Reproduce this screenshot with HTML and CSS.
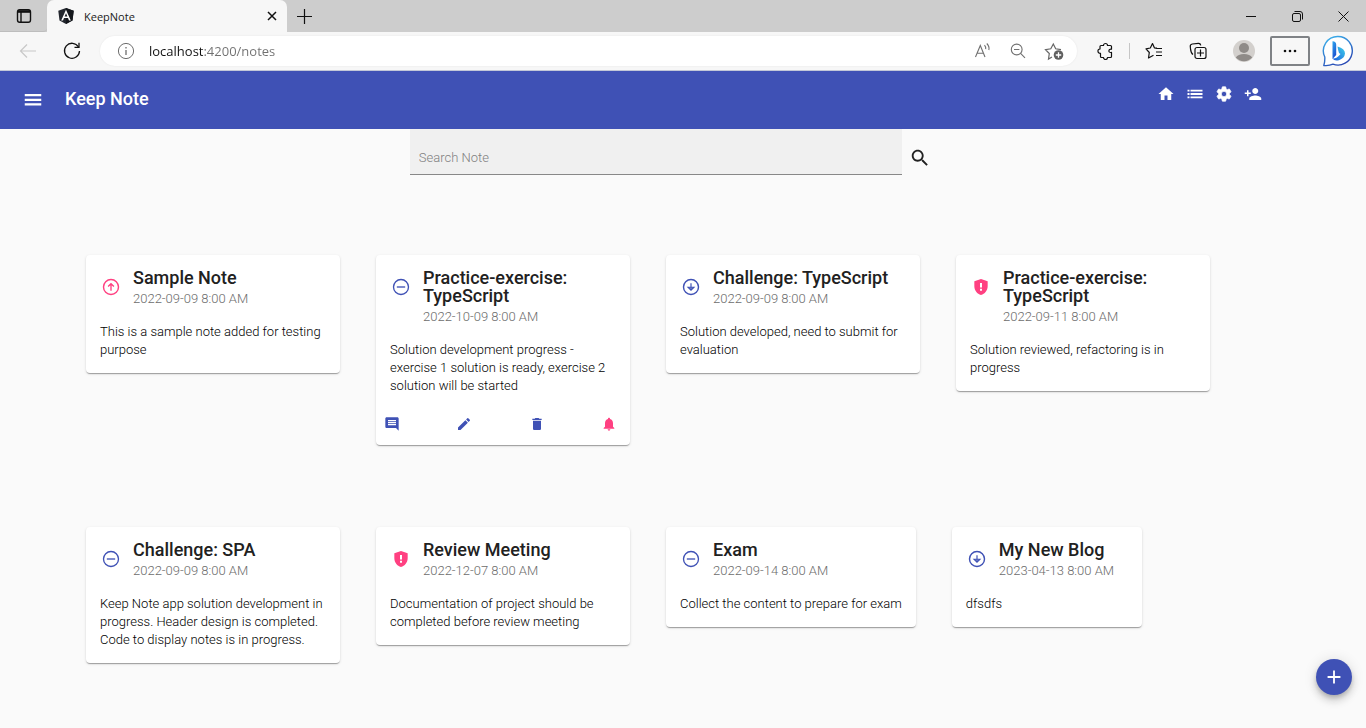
FILE: index.html
```html
<!DOCTYPE html>
<html lang="en">
<head>
<meta charset="utf-8">
<title>KeepNote</title>
<link rel="stylesheet" href="styles.css">
</head>
<body>
<svg class="defs" aria-hidden="true">
  <defs>
    <symbol id="minus-circle" viewBox="0 0 24 24"><circle cx="12" cy="12" r="9" fill="none" stroke="currentColor" stroke-width="1.600"/><path d="M7 12h10" stroke="currentColor" stroke-width="1.600"/></symbol>
    <symbol id="up-circle" viewBox="0 0 24 24"><circle cx="12" cy="12" r="9" fill="none" stroke="currentColor" stroke-width="1.700"/><path d="M12 16.500V8.500M8.500 11.500 12 8l3.500 3.500" fill="none" stroke="currentColor" stroke-width="1.600"/></symbol>
    <symbol id="down-circle" viewBox="0 0 24 24"><circle cx="12" cy="12" r="9" fill="none" stroke="currentColor" stroke-width="1.700"/><path d="M12 7.500v8M8.500 12.300l3.500 3.500 3.500-3.500z" stroke="currentColor" stroke-width="1.400" fill="none"/></symbol>
    <symbol id="shield" viewBox="0 0 24 24"><path fill-rule="evenodd" d="M12 2.500 4 5v6.100c0 5.050 3.410 9.300 8 10.400 4.590-1.100 8-5.350 8-10.400V5l-8-2.500zm1.200 14h-2.400v-2.300h2.400v2.300zm0-4h-2.400V7.300h2.400v5.200z"/></symbol>
  </defs>
</svg>

<header class="browser">
  <div class="tabstrip">
    <button class="tab-actions" aria-label="Tab actions menu">
      <svg width="16" height="16" viewBox="0 0 16 16" fill="none" stroke="#111" stroke-width="1.400"><rect x="1.500" y="1.700" width="13" height="12.600" rx="2.200"/><path d="M2 3.500h12" stroke-width="2.600"/><path d="M5 4v10"/></svg>
    </button>
    <div class="tab">
      <svg width="18" height="18" viewBox="0 0 18 18"><path fill="#23272e" d="M9 1 16.700 3.700 15.500 13.500 9 17 2.500 13.500 1.300 3.700z"/><path fill="#14171c" d="M9 1l7.700 2.700-1.200 9.800L9 17z"/><path fill="#fff" fill-rule="evenodd" d="M9 2.800 4.200 13.400H6l1-2.400h4l1 2.400h1.800zM9 6.200l1.400 3.300H7.600z"/></svg>
      <span class="tab-title">KeepNote</span>
      <button class="tab-close" aria-label="Close tab"><svg width="10" height="10" viewBox="0 0 10 10" stroke="#111" stroke-width="1.500"><path d="M1 1l8 8M9 1 1 9"/></svg></button>
    </div>
    <button class="new-tab" aria-label="New tab"><svg width="15" height="15" viewBox="0 0 15 15" stroke="#111" stroke-width="1.200"><path d="M7.500 0v15M0 7.500h15"/></svg></button>
    <div class="window-buttons">
      <button aria-label="Minimize"><svg width="11" height="11" viewBox="0 0 11 11" stroke="#111"><path d="M0 5.500h10"/></svg></button>
      <button aria-label="Restore"><svg width="11" height="11" viewBox="0 0 11 11" fill="none" stroke="#111"><rect x=".5" y="2.500" width="8" height="8" rx="1.500"/><path d="M2.500.5H8a2.500 2.500 0 0 1 2.500 2.500v5.500"/></svg></button>
      <button aria-label="Close window"><svg width="11" height="11" viewBox="0 0 11 11" stroke="#111"><path d="M.5.5l10 10M10.500.5l-10 10"/></svg></button>
    </div>
  </div>

  <div class="toolbar">
    <button aria-label="Back" disabled><svg width="18" height="18" viewBox="0 0 18 18" fill="none" stroke="#c8c8c8" stroke-width="1.200"><path d="M17 9H1.500M8 2.500 1.500 9 8 15.500"/></svg></button>
    <button aria-label="Refresh"><svg width="18" height="18" viewBox="0 0 18 18" fill="none" stroke="#111" stroke-width="1.300"><path d="M15.500 5A7.500 7.500 0 1 0 16.500 9"/><path d="M16 .8V5.300h-4.500"/></svg></button>
    <div class="address">
      <svg width="18" height="18" viewBox="0 0 18 18" fill="none" stroke="#6e6e6e"><circle cx="9" cy="9" r="7.600"/><path d="M9 8v5M9 5v1.500" stroke-width="1.300"/></svg>
      <input class="url" type="text" aria-label="Address" value="localhost:4200/notes">
      <button aria-label="Read aloud"><svg width="18" height="18" viewBox="0 0 18 18" fill="none" stroke="#707070" stroke-width="1.100"><path d="M2.500 15 7.300 3.500 12 15M4 11.200h6.600M11.500 3.200q1.600 1.800 1.200 4M13.800 1.500q3 3 2 6.500"/></svg></button>
      <button aria-label="Zoom"><svg width="16" height="16" viewBox="0 0 16 16" fill="none" stroke="#707070" stroke-width="1.100"><circle cx="6.700" cy="6.500" r="5.400"/><path d="M10.600 10.400 15 14.800M4 6.500h5.400"/></svg></button>
      <button aria-label="Add to favorites"><svg width="20" height="20" viewBox="0 0 20 20" fill="none" stroke="#666" stroke-width="1.200"><path d="M8 16 4.500 18l.8-5.500L1.500 8.600l5.300-.8L9.300 3l2.400 4.800 5.300.8"/><circle cx="14.500" cy="14" r="4.800" fill="#606060" stroke="none"/><path d="M14.500 11.300v5.400M11.800 14h5.400" stroke="#fff" stroke-width="1.300"/></svg></button>
    </div>
    <button aria-label="Extensions"><svg width="18" height="18" viewBox="0 0 18 18" fill="none" stroke="#111" stroke-width="1.200" stroke-linejoin="round"><path d="M5 3.500h2.500a2 2 0 0 1 4 0H14.500q1 0 1 1v2.700c-3.200-.8-3.700 4 0 3.200V14.500q0 1-1 1h-3a2 2 0 0 1-4 0H5.500q-1 0-1-1V11.400C1.200 11.400 1.200 7 4 7V4.500q0-1 1-1z"/></svg></button>
    <span class="divider"></span>
    <button aria-label="Favorites"><svg width="18" height="18" viewBox="0 0 18 18" fill="none" stroke="#111" stroke-width="1.200" stroke-linejoin="round"><path d="M12 6.200 9.500 6 7.500 1.500 5.300 6 1 6.800l3.300 3.700L3.500 16l5-2.700M10.500 6.500H17M11 10h6M11 13.500h6"/></svg></button>
    <button aria-label="Collections"><svg width="18" height="18" viewBox="0 0 18 18" fill="none" stroke="#111" stroke-width="1.200"><rect x="6" y="5.500" width="11" height="11" rx="2"/><path d="M11.500 7.500v7M8 11h7M4 12.500C1.500 11 1.800 9 1.300 5q-.5-2.500 2-3l6-.7q2-.2 2.500 2"/></svg></button>
    <button aria-label="Profile"><svg width="22" height="22" viewBox="0 0 22 22"><circle cx="11" cy="11" r="11" fill="#d3d0cd"/><circle cx="11" cy="8" r="5" fill="#8f8b88"/><path fill="#8f8b88" d="M2.800 17.500Q5 14 11 14t8.200 3.500A11 11 0 0 1 2.800 17.500z"/></svg></button>
    <button class="more" aria-label="Settings and more"><svg width="14" height="4" viewBox="0 0 14 4" fill="#111"><circle cx="2" cy="2" r="1.300"/><circle cx="7" cy="2" r="1.300"/><circle cx="12" cy="2" r="1.300"/></svg></button>
    <button aria-label="Discover"><svg width="32" height="32" viewBox="0 0 32 32"><defs><linearGradient id="ring" x1="0" y1="0" x2=".5" y2="1"><stop offset="0" stop-color="#3db9f0"/><stop offset="1" stop-color="#2a4bb5"/></linearGradient><linearGradient id="bing" x1="0" y1="0" x2=".4" y2="1"><stop offset="0" stop-color="#2ea8ee"/><stop offset="1" stop-color="#1b4fd0"/></linearGradient><linearGradient id="swoosh" x1="1" y1="0" x2="0" y2="1"><stop offset="0" stop-color="#3ed1ea"/><stop offset="1" stop-color="#1c5cdd"/></linearGradient></defs><path fill="#fff" stroke="url(#ring)" stroke-width="1.400" stroke-linejoin="round" d="M16 1.500a14.300 14.300 0 1 1-5 27.700Q7 31 1.800 30.500 3 27 2.800 22A14.300 14.300 0 0 1 16 1.500z"/><path fill="url(#bing)" d="M10.500 6.300q3.700.3 3.700 3.400V20l-3.700 4z"/><path fill="url(#swoosh)" d="M15.500 11.500q7.500 2.200 7.500 7-.5 4.500-5.500 6.500-5 1.500-7-1.500 4 .5 8-4.500l-1.500-1q-1-3-1.500-6.500z"/></svg></button>
  </div>
</header>

<nav class="appbar">
  <button class="menu" aria-label="Menu"><svg width="22" height="22" viewBox="0 0 24 24"><path d="M3 18h18v-2.500H3zm0-5h18v-2.500H3zM3 5.500V8h18V5.500z"/></svg></button>
  <h1 class="brand">Keep Note</h1>
  <div class="links">
    <a href="#" aria-label="Home"><svg viewBox="0 0 24 24"><path d="M10 20v-6h4v6h5v-8h3L12 3 2 12h3v8z"/></svg></a>
    <a href="#" aria-label="List"><svg viewBox="0 0 24 24"><path d="M2 10.700h2.700v2.600H2zm0 4.500h2.700v2.600H2zm0-9h2.700v2.600H2zm4 4.500h16v2.600H6zm0 4.500h16v2.600H6zm0-9v2.600h16V6.200z"/></svg></a>
    <a href="#" aria-label="Settings"><svg viewBox="0 0 24 24"><path stroke="currentColor" d="M19.140 12.940c.04-.3.06-.61.06-.94 0-.32-.02-.64-.07-.94l2.030-1.580c.18-.14.23-.41.12-.61l-1.920-3.320c-.12-.22-.37-.29-.59-.22l-2.390.96c-.5-.38-1.030-.7-1.620-.94l-.36-2.540c-.04-.24-.24-.41-.48-.41h-3.840c-.24 0-.43.17-.47.41l-.36 2.540c-.59.24-1.130.57-1.620.94l-2.390-.96c-.22-.08-.47 0-.59.22L2.740 8.870c-.12.21-.08.47.12.61l2.030 1.580c-.05.3-.09.63-.09.94s.02.64.07.94l-2.030 1.580c-.18.14-.23.41-.12.61l1.920 3.320c.12.22.37.29.59.22l2.390-.96c.5.38 1.030.7 1.620.94l.36 2.540c.05.24.24.41.48.41h3.840c.24 0 .44-.17.47-.41l.36-2.540c.59-.24 1.130-.56 1.620-.94l2.390.96c.22.08.47 0 .59-.22l1.920-3.320c.12-.22.07-.47-.12-.61l-2.010-1.580zM12 15.600c-1.980 0-3.600-1.620-3.600-3.600s1.620-3.600 3.600-3.600 3.600 1.620 3.600 3.600-1.620 3.600-3.600 3.600z"/></svg></a>
    <a href="#" aria-label="Add person"><svg viewBox="0 0 24 24"><path d="M15 12c2.210 0 4-1.790 4-4s-1.790-4-4-4-4 1.790-4 4 1.790 4 4 4zm-9-2V7H4v3H1v2h3v3h2v-3h3v-2H6zm9 4c-2.670 0-8 1.340-8 4v2h16v-2c0-2.660-5.330-4-8-4z"/></svg></a>
  </div>
</nav>

<main>
  <form class="search">
    <input type="text" aria-label="Search Note" placeholder="Search Note">
    <button type="button" aria-label="Search"><svg width="22" height="22" viewBox="0 0 24 24"><path d="M15.500 14h-.79l-.28-.27C15.410 12.590 16 11.110 16 9.500 16 5.910 13.090 3 9.500 3S3 5.910 3 9.500 5.910 16 9.500 16c1.610 0 3.090-.59 4.230-1.570l.27.28v.79l5 4.990L20.490 19l-4.990-5zm-6 0C7.010 14 5 11.990 5 9.500S7.010 5 9.500 5 14 7.010 14 9.500 11.990 14 9.500 14z"/></svg></button>
  </form>

  <section class="notes">
    <article class="card">
      <div class="card-head"><svg class="icon accent"><use href="#up-circle"/></svg><div><h2>Sample Note</h2><p class="date">2022-09-09 8:00 AM</p></div></div>
      <p class="text">This is a sample note added for testing purpose</p>
    </article>
    <article class="card">
      <div class="card-head"><svg class="icon"><use href="#minus-circle"/></svg><div><h2>Practice-exercise: TypeScript</h2><p class="date">2022-10-09 8:00 AM</p></div></div>
      <p class="text">Solution development progress - exercise 1 solution is ready, exercise 2 solution will be started</p>
      <div class="actions">
        <button aria-label="Comment"><svg viewBox="0 0 24 24"><path d="M21.990 4c0-1.100-.89-2-1.990-2H4c-1.100 0-2 .9-2 2v12c0 1.100.9 2 2 2h14l4 4-.01-18zM18 14H6v-2h12v2zm0-3H6V9h12v2zm0-3H6V6h12v2z"/></svg></button>
        <button aria-label="Edit"><svg viewBox="0 0 24 24"><path d="M3 17.250V21h3.750L17.810 9.940l-3.750-3.750L3 17.250zM20.710 7.040a1 1 0 0 0 0-1.410l-2.340-2.340a1 1 0 0 0-1.410 0l-1.830 1.830 3.750 3.750 1.830-1.830z"/></svg></button>
        <button aria-label="Delete"><svg viewBox="0 0 24 24"><path d="M6 19c0 1.100.9 2 2 2h8c1.100 0 2-.9 2-2V7H6v12zM19 4h-3.500l-1-1h-5l-1 1H5v2h14V4z"/></svg></button>
        <button class="accent" aria-label="Reminder"><svg viewBox="0 0 24 24"><path d="M12 22c1.100 0 2-.9 2-2h-4c0 1.100.9 2 2 2zm6-6v-5c0-3.070-1.640-5.640-4.500-6.320V4c0-.83-.67-1.500-1.500-1.500s-1.500.67-1.500 1.500v.68C7.630 5.360 6 7.920 6 11v5l-2 2v1h16v-1l-2-2z"/></svg></button>
      </div>
    </article>
    <article class="card">
      <div class="card-head"><svg class="icon"><use href="#down-circle"/></svg><div><h2>Challenge: TypeScript</h2><p class="date">2022-09-09 8:00 AM</p></div></div>
      <p class="text">Solution developed, need to submit for evaluation</p>
    </article>
    <article class="card">
      <div class="card-head"><svg class="icon accent"><use href="#shield"/></svg><div><h2>Practice-exercise: TypeScript</h2><p class="date">2022-09-11 8:00 AM</p></div></div>
      <p class="text">Solution reviewed, refactoring is in progress</p>
    </article>
    <article class="card">
      <div class="card-head"><svg class="icon"><use href="#minus-circle"/></svg><div><h2>Challenge: SPA</h2><p class="date">2022-09-09 8:00 AM</p></div></div>
      <p class="text">Keep Note app solution development in progress. Header design is completed. Code to display notes is in progress.</p>
    </article>
    <article class="card">
      <div class="card-head"><svg class="icon accent"><use href="#shield"/></svg><div><h2>Review Meeting</h2><p class="date">2022-12-07 8:00 AM</p></div></div>
      <p class="text">Documentation of project should be completed before review meeting</p>
    </article>
    <article class="card">
      <div class="card-head"><svg class="icon"><use href="#minus-circle"/></svg><div><h2>Exam</h2><p class="date">2022-09-14 8:00 AM</p></div></div>
      <p class="text">Collect the content to prepare for exam</p>
    </article>
    <article class="card">
      <div class="card-head"><svg class="icon"><use href="#down-circle"/></svg><div><h2>My New Blog</h2><p class="date">2023-04-13 8:00 AM</p></div></div>
      <p class="text">dfsdfs</p>
    </article>
  </section>
</main>

<button class="fab" aria-label="Add note"><svg width="22" height="22" viewBox="0 0 24 24"><path d="M19 13h-6v6h-2v-6H5v-2h6V5h2v6h6v2z"/></svg></button>
</body>
</html>
```

FILE: styles.css
```css
* { box-sizing: border-box; }

body {
  margin: 0;
  min-height: 100vh;
  background: #fafafa;
  color: rgba(0, 0, 0, .87);
  font-family: Roboto, "Liberation Sans", sans-serif;
}

h1, h2, p { margin: 0; }

button {
  display: inline-flex;
  align-items: center;
  justify-content: center;
  padding: 0;
  border: 0;
  background: none;
  color: inherit;
  font: inherit;
}

svg { display: block; flex: none; }

.defs { position: absolute; width: 0; height: 0; }

/* Browser frame */
.browser {
  background: #f7f7f7;
  border-bottom: 1px solid #c3c8d8;
  font-family: "Open Sans", "Noto Sans", sans-serif;
}

.tabstrip {
  display: flex;
  align-items: stretch;
  height: 32px;
  background: #cdcdcd;
}

.tab-actions { width: 47px; border-bottom: 1px solid #bdbdbd; border-radius: 0 0 4px 0; }

.tab {
  display: flex;
  align-items: center;
  width: 240px;
  padding: 0 10px;
  background: #f7f7f7;
  border-radius: 7px 7px 0 0;
}

.tab-title { flex: 1; margin-left: 9px; font-size: 11px; color: #1b1b1b; }
.tab-close { width: 11px; }
.new-tab { width: 35px; }

.window-buttons { display: flex; margin-left: auto; }
.window-buttons button { width: 46px; }

.toolbar {
  display: grid;
  grid-template-columns: 44px 44px 1fr 48px 1px 48px 40px 52px 40px 56px;
  align-items: center;
  justify-items: center;
  height: 38px;
  padding-left: 6px;
}

.address {
  display: flex;
  align-items: center;
  justify-self: stretch;
  height: 30px;
  margin: 0 4px 0 6px;
  padding: 0 5px 0 17px;
  background: #fff;
  border-radius: 15px;
  box-shadow: 0 0 2px rgba(0, 0, 0, .08);
}

.address button { width: 36px; }

.url {
  flex: 1;
  min-width: 0;
  margin-left: 14px;
  padding: 0;
  border: 0;
  outline: 0;
  background: linear-gradient(90deg, #111 55px, #707070 55px);
  background-clip: text;
  -webkit-background-clip: text;
  color: transparent;
  font: 13px/20px "Open Sans", "Noto Sans", sans-serif;
}

.divider { width: 1px; height: 16px; background: #c6c6c6; }

.more {
  width: 40px;
  height: 30px;
  border: 2px solid #7f8286;
  border-radius: 2px;
}

/* Application bar */
.appbar {
  display: flex;
  align-items: center;
  height: 58px;
  padding: 0 104px 0 22px;
  background: #3f51b5;
  color: #fff;
}

.appbar svg { fill: currentColor; }
.brand { margin-left: 21px; padding-bottom: 2px; font-size: 18px; line-height: 24px; font-weight: 500; }

.links {
  display: flex;
  align-self: flex-start;
  gap: 11px;
  margin-left: auto;
  padding-top: 14px;
}

.links a { color: inherit; }
.links svg { width: 18px; height: 18px; }

/* Search */
.search { display: flex; align-items: center; margin-left: 30%; }

.search input {
  width: 51.5%;
  height: 46px;
  padding: 12px 9px 0;
  border: 0;
  border-bottom: 1px solid #888;
  outline: 0;
  background: #f0f0f0;
  color: inherit;
  font: 300 13px/18px Roboto, "Liberation Sans", sans-serif;
}

.search input::placeholder { color: #808080; opacity: 1; }
.search button { width: 36px; padding-top: 12px; }
.search svg { fill: currentColor; }

/* Notes */
.notes {
  display: flex;
  flex-wrap: wrap;
  align-items: flex-start;
  gap: 82px 36px;
  padding: 80px 86px;
}

.card {
  max-width: 254px;
  padding: 14px;
  background: #fff;
  border-radius: 4px;
  box-shadow: 0 2px 1px -1px rgba(0, 0, 0, .2), 0 1px 1px rgba(0, 0, 0, .14), 0 1px 3px rgba(0, 0, 0, .12);
}

.card-head { display: flex; gap: 11px; padding-right: 14px; color: #3f51b5; }
.icon { width: 20px; height: 20px; margin: 8px 1px 0; fill: currentColor; }
.accent { color: #ff4081; }

h2 { color: #212121; font-size: 18px; line-height: 18px; font-weight: 500; }
.date { margin-top: 3px; color: #6c6c6c; font-weight: 300; font-size: 13px; line-height: 18px; }
.text { margin-top: 15px; color: #000; font-weight: 300; font-size: 13px; line-height: 18px; }

.actions {
  display: flex;
  justify-content: space-between;
  margin: 17px -1px -5px -6px;
  color: #3f51b5;
}

.actions button { height: 24px; }
.actions svg { width: 16px; height: 16px; fill: currentColor; }

.fab {
  position: fixed;
  right: 14px;
  bottom: 33px;
  width: 36px;
  height: 36px;
  border-radius: 50%;
  background: #3f51b5;
  color: #fff;
  box-shadow: 0 3px 5px -1px rgba(0, 0, 0, .2), 0 6px 10px rgba(0, 0, 0, .14), 0 1px 14px rgba(0, 0, 0, .12);
}

.fab svg { fill: currentColor; }
```
